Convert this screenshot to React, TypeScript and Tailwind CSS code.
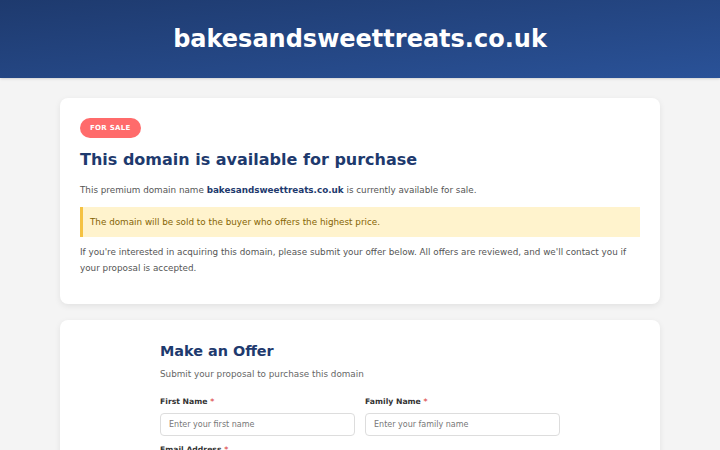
import React from 'react';

export default function App() {
  return (
    <div className="min-h-screen bg-[#f4f4f4] font-['DejaVu_Sans',sans-serif] text-[#444]">
      {/* Header */}
      <header className="h-[78px] flex items-center justify-center bg-gradient-to-br from-[#1e3a6e] to-[#2a5298] shadow-sm">
        <h1 className="text-[24px] font-bold text-white leading-none">bakesandsweettreats.co.uk</h1>
      </header>

      <main className="w-[600px] mx-auto pt-5 flex flex-col gap-4">
        {/* Sale card */}
        <section className="bg-white rounded-lg shadow-[0_2px_6px_rgba(0,0,0,0.08)] px-5 pt-5 pb-[28px]">
          <span className="block w-fit bg-[#ff6b6b] text-white text-[7px] font-bold uppercase rounded-full px-[10px] py-[5px] leading-[10px] tracking-[0.04em]">
            For Sale
          </span>
          <h2 className="mt-[11px] text-[16px] font-bold text-[#1e3a6e] leading-[22px]">
            This domain is available for purchase
          </h2>
          <p className="mt-[11px] text-[8.8px] text-[#555] leading-4">
            This premium domain name <strong className="text-[#1e3a6e]">bakesandsweettreats.co.uk</strong> is currently available for sale.
          </p>
          <div className="mt-[9px] bg-[#fff3cd] border-l-[3px] border-[#f5c242] px-[7px] py-[7px] text-[8.8px] leading-4 text-[#856404]">
            The domain will be sold to the buyer who offers the highest price.
          </div>
          <p className="mt-[7px] text-[8.8px] leading-4 text-[#555]">
            If you're interested in acquiring this domain, please submit your offer below. All offers are reviewed, and we'll contact you if your proposal is accepted.
          </p>
        </section>

        {/* Offer form */}
        <section className="bg-white rounded-lg shadow-[0_2px_6px_rgba(0,0,0,0.08)] pt-[21px] pb-10">
          <div className="w-[400px] mx-auto">
            <h2 className="text-[14.4px] font-bold text-[#1e3a6e] leading-[20px]">Make an Offer</h2>
            <p className="mt-[5px] text-[8.8px] text-[#666] leading-4">Submit your proposal to purchase this domain</p>
            <div className="mt-[14px] grid grid-cols-2 gap-[10px]">
              <label className="flex flex-col">
                <span className="text-[7.7px] font-bold text-[#333] leading-3">
                  First Name <span className="text-[#e05a5a]">*</span>
                </span>
                <input
                  className="mt-[5px] h-[23px] border border-[#ddd] rounded px-2 text-[8px] placeholder:text-[#777] outline-none"
                  placeholder="Enter your first name"
                />
              </label>
              <label className="flex flex-col">
                <span className="text-[7.7px] font-bold text-[#333] leading-3">
                  Family Name <span className="text-[#e05a5a]">*</span>
                </span>
                <input
                  className="mt-[5px] h-[23px] border border-[#ddd] rounded px-2 text-[8px] placeholder:text-[#777] outline-none"
                  placeholder="Enter your family name"
                />
              </label>
            </div>
            <div className="mt-[8px] flex flex-col">
              <span className="text-[7.7px] font-bold text-[#333] leading-3">
                Email Address <span className="text-[#e05a5a]">*</span>
              </span>
              <input
                className="mt-[5px] h-[23px] border border-[#ddd] rounded px-2 text-[8px] placeholder:text-[#777] outline-none"
                placeholder="Enter your email address"
              />
            </div>
          </div>
        </section>
      </main>
    </div>
  );
}
